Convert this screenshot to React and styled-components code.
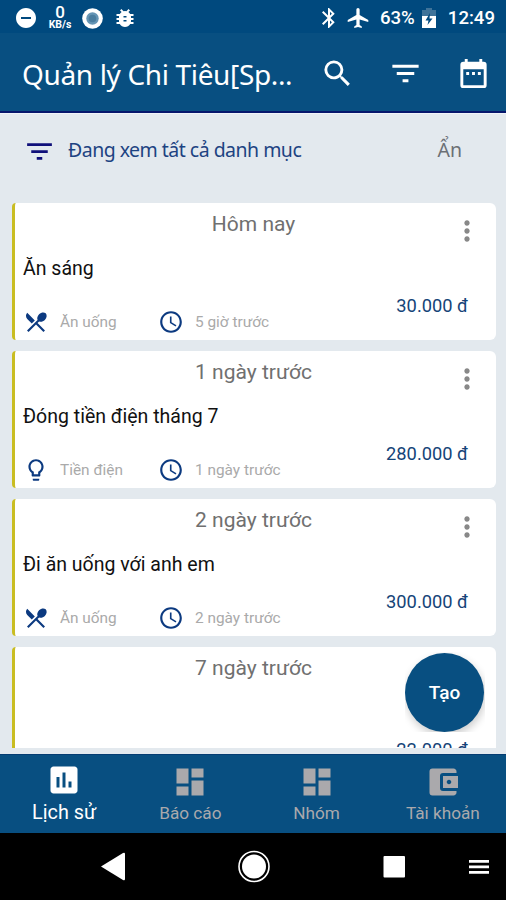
import React from 'react'
import styled, {createGlobalStyle} from 'styled-components'
import {
    MdBluetooth, MdDoNotDisturbOn, MdSearch, MdFilterList, MdMoreVert, MdLightbulbOutline,
    MdAccessTime, MdAssessment, MdDashboard, MdAccountBalanceWallet
} from 'react-icons/md'

const GlobalStyle = createGlobalStyle`
    * { box-sizing: border-box; }
    body {
        margin: 0;
        font-family: Roboto, "Noto Sans", sans-serif;
    }
    svg { display: block; flex: none; }
`

const Screen = styled.div`
    display: flex;
    flex-direction: column;
    width: 506px;
    height: 900px;
    overflow: hidden;
    position: relative;
    background: #e3e9ee;
`

const StatusBar = styled.div`
    display: flex;
    justify-content: space-between;
    height: 33px;
    padding: 1px 11px 0 14px;
    background: #00497e;
    color: #fff;
`

const StatusGroup = styled.div`
    display: flex;
    align-items: center;
    height: 34px;
    gap: ${props => props.$gap}px;
`

const Speed = styled.div`
    display: flex;
    flex-direction: column;
    align-items: center;
    width: 25px;
    font-weight: 500;
    font-size: 17px;
    line-height: 14px;
    small {
        font-size: 10.5px;
        line-height: 12px;
        font-weight: 700;
    }
`

const StatusText = styled.span`
    font-weight: 500;
    font-size: 18.6px;
    white-space: nowrap;
    margin-left: ${props => props.$left}px;
    margin-right: ${props => props.$right || 0}px;
`

const AppBar = styled.div`
    display: flex;
    align-items: center;
    height: 80px;
    padding: 0 15px 0 22px;
    background: #084f81;
    border-bottom: 2px solid #06176c;
    color: #fff;
`

const AppTitle = styled.div`
    flex: 1;
    font-family: "Noto Sans", sans-serif;
    font-size: 28px;
    letter-spacing: -0.35px;
    white-space: nowrap;
    margin-top: 4px;
`

const AppActions = styled.div`
    display: flex;
    gap: 33px;
    margin-top: 2px;
`

const FilterBar = styled.div`
    display: flex;
    align-items: center;
    flex: none;
    height: 90px;
    padding: 0 44px 18px 23px;
    border-top: 1px solid #f1f3f8;
    color: #10107a;
    font-family: "Noto Sans", sans-serif;
    font-size: 19.5px;
    svg { margin-top: 4px; }
`

const FilterText = styled.span`
    flex: 1;
    margin-left: 12px;
    color: #1d4382;
    letter-spacing: -0.52px;
    white-space: nowrap;
`

const HideButton = styled.span`
    color: #6c7075;
`

const List = styled.div`
    display: flex;
    flex-direction: column;
    gap: 11px;
    height: 545px;
    padding: 0 10px 0 12px;
    overflow: hidden;
`

const Card = styled.div`
    flex: none;
    height: 137px;
    padding-left: 8px;
    background: #fff;
    border-left: 3px solid #c9bd22;
    border-radius: 4px 6px 6px 4px;
`

const CardHead = styled.div`
    display: grid;
    grid-template-columns: 1fr auto 1fr;
    align-items: center;
    height: 42px;
    margin-left: -12px;
    font-size: 21px;
    color: #707070;
    svg {
        justify-self: end;
        margin: 12px 13px -2px 0;
        color: #888;
    }
`

const CardTitle = styled.div`
    height: 46px;
    line-height: 48px;
    font-size: 19.5px;
    color: #111;
`

const CardFoot = styled.div`
    display: flex;
    align-items: flex-start;
`

const Meta = styled.div`
    display: flex;
    align-items: center;
    gap: 11px;
    width: ${props => props.$width}px;
    margin-top: 18px;
    color: #0c3a80;
    white-space: nowrap;
    span {
        font-size: 15.4px;
        color: #aaa;
    }
`

const Amount = styled.div`
    margin: 3px 28px 0 auto;
    font-size: 18.3px;
    line-height: 24px;
    color: #154478;
`

const FabBox = styled.div`
    position: absolute;
    left: 405px;
    top: 652px;
    width: 80px;
    height: 80px;
    overflow: hidden;
`

const Fab = styled.div`
    display: flex;
    align-items: center;
    justify-content: center;
    width: 79px;
    height: 79px;
    margin-top: 1px;
    border-radius: 50%;
    background: #084f81;
    box-shadow: 1px 4px 8px rgba(0, 0, 0, 0.2);
    color: #fff;
    font-size: 19px;
    font-weight: 500;
`

const TabBar = styled.div`
    display: grid;
    grid-template-columns: repeat(4, 1fr);
    height: 79px;
    margin-top: 6px;
    padding-left: 1px;
    background: #084f81;
    border-top: 1px solid #053c72;
`

const Tab = styled.div`
    display: flex;
    flex-direction: column;
    align-items: center;
    padding-top: ${props => props.$active ? 7 : 9}px;
    color: ${props => props.$active ? '#fff' : '#aaa9ac'};
    font-size: ${props => props.$active ? 19.8 : 17.2}px;
    line-height: 24px;
    white-space: nowrap;
    span {
        margin-top: ${props => props.$active ? 3 : 1}px;
    }
`

const SystemBar = styled.div`
    height: 67px;
    background: #000;
    svg { fill: #fff; }
`

const RecordingIcon = () => (
    <svg width="21" height="21" viewBox="0 0 21 21">
        <circle cx="10.5" cy="10.5" r="10.3" fill="#fff" />
        <circle cx="10.5" cy="10.5" r="6.2" fill="#6595b5" />
        <circle cx="10.5" cy="10.5" r="3.8" fill="#4a7d9f" />
    </svg>
)

const BugIcon = () => (
    <svg width="24" height="24" viewBox="0 0 24 24" fill="#fff">
        <path d="M20.500 8h-3.310a6 6 0 0 0-1.820-1.960L17 4.410 15.590 3l-2.170 2.170a6 6 0 0 0-2.830 0L8.410 3 7 4.410l1.620 1.630A6 6 0 0 0 6.810 8H3.500v2h2.590L6 11v1H3.500v2H6v1l.090 1H3.500v2h3.310a6 6 0 0 0 10.380 0h3.310v-2h-2.590l.090-1v-1h2.500v-2H18v-1l-.090-1h2.590zM13.500 15.500h-3V14h3zm0-4h-3V10h3z" />
    </svg>
)

const PlaneIcon = () => (
    <svg width="26" height="24" viewBox="0 0 24 24" preserveAspectRatio="none" fill="#fff">
        <path d="M21.500 16v-2L13.500 9V3.500a1.500 1.500 0 0 0-3 0V9l-8 5v2l8-2.500V19l-2 1.500V22l3.500-1 3.500 1v-1.500l-2-1.500v-5.500z" />
    </svg>
)

const BatteryIcon = () => (
    <svg width="14" height="22" viewBox="0 0 14 22">
        <path d="M4 1h6v2h4v7H0V3h4z" fill="#3f7399" />
        <path d="M0 9h14v12H0z" fill="#fff" />
        <path d="M8 6L3.500 13.500h3L5.500 18 10.500 11.500H7.500z" fill="#00497e" />
    </svg>
)

const CalendarIcon = () => (
    <svg width="35" height="35" viewBox="0 0 24 24" fill="#fff">
        <path d="M9 11H7v2h2zm4 0h-2v2h2zm4 0h-2v2h2zM19 4h-1V2h-2v2H8V2H6v2H5a2 2 0 0 0-2 2v14a2 2 0 0 0 2 2h14a2 2 0 0 0 2-2V6a2 2 0 0 0-2-2zm0 16H5V9h14z" />
    </svg>
)

const DiningIcon = ({size}) => (
    <svg width={size} height={size} viewBox="0 0 24 24" fill="currentColor">
        <path d="M8.100 13.340l2.830-2.830L3.910 3.500a4 4 0 0 0 0 5.660zM14.880 11.530c1.530.710 3.680.210 5.270-1.380 1.910-1.910 2.280-4.650.810-6.120-1.460-1.460-4.200-1.100-6.120.810-1.590 1.590-2.090 3.740-1.380 5.270L3.700 19.870l1.410 1.410L12 14.410l6.880 6.880 1.410-1.410L13.410 13z" />
    </svg>
)

const records = [
    {day: 'Hôm nay', title: 'Ăn sáng', icon: DiningIcon, category: 'Ăn uống', ago: '5 giờ trước', amount: '30.000 đ'},
    {day: '1 ngày trước', title: 'Đóng tiền điện tháng 7', icon: MdLightbulbOutline, category: 'Tiền điện', ago: '1 ngày trước', amount: '280.000 đ'},
    {day: '2 ngày trước', title: 'Đi ăn uống với anh em', icon: DiningIcon, category: 'Ăn uống', ago: '2 ngày trước', amount: '300.000 đ'},
    {day: '7 ngày trước', title: '', amount: '22.000 đ'},
]

const tabs = [
    {label: 'Lịch sử', icon: MdAssessment, active: true},
    {label: 'Báo cáo', icon: MdDashboard},
    {label: 'Nhóm', icon: MdDashboard},
    {label: 'Tài khoản', icon: MdAccountBalanceWallet},
]

const Record = ({record}) => {
    const Icon = record.icon
    return (
        <Card>
            <CardHead>
                <i />
                <span>{record.day}</span>
                {record.icon && <MdMoreVert size={32} />}
            </CardHead>
            <CardTitle>{record.title}</CardTitle>
            <CardFoot>
                {record.icon && (
                    <>
                        <Meta $width={135}><Icon size={26} /><span>{record.category}</span></Meta>
                        <Meta $width={150}><MdAccessTime size={26} /><span>{record.ago}</span></Meta>
                    </>
                )}
                <Amount>{record.amount}</Amount>
            </CardFoot>
        </Card>
    )
}

const App = () => (
    <Screen>
        <GlobalStyle />
        <StatusBar>
            <StatusGroup $gap={9.5}>
                <MdDoNotDisturbOn size={24} />
                <Speed><span>0</span><small>KB/s</small></Speed>
                <RecordingIcon />
                <BugIcon />
            </StatusGroup>
            <StatusGroup $gap={4}>
                <MdBluetooth size={24} />
                <PlaneIcon />
                <StatusText $left={5} $right={3}>63%</StatusText>
                <BatteryIcon />
                <StatusText $left={8}>12:49</StatusText>
            </StatusGroup>
        </StatusBar>
        <AppBar>
            <AppTitle>Quản lý Chi Tiêu[Sp...</AppTitle>
            <AppActions>
                <MdSearch size={35} />
                <MdFilterList size={35} />
                <CalendarIcon />
            </AppActions>
        </AppBar>
        <FilterBar>
            <MdFilterList size={33} />
            <FilterText>Đang xem tất cả danh mục</FilterText>
            <HideButton>Ẩn</HideButton>
        </FilterBar>
        <List>
            {records.map(record => <Record key={record.day} record={record} />)}
        </List>
        <TabBar>
            {tabs.map(({label, icon: Icon, active}) => (
                <Tab key={label} $active={active}>
                    <Icon size={36} />
                    <span>{label}</span>
                </Tab>
            ))}
        </TabBar>
        <SystemBar>
            <svg width="506" height="67" viewBox="0 833 506 67">
                <path d="M101 866.500L123 853q2-1 2 1v25q0 2-2 1z" />
                <circle cx="254" cy="866.500" r="15" fillOpacity="0" stroke="#fff" strokeWidth="1.600" />
                <circle cx="254" cy="866.500" r="12" />
                <rect x="383.500" y="856" width="21.500" height="21.500" rx="1" />
                <path d="M469 860h20v2.800h-20zM469 865.500h20v2.800h-20zM469 871h20v2.800h-20z" />
            </svg>
        </SystemBar>
        <FabBox><Fab>Tạo</Fab></FabBox>
    </Screen>
)

export default App
